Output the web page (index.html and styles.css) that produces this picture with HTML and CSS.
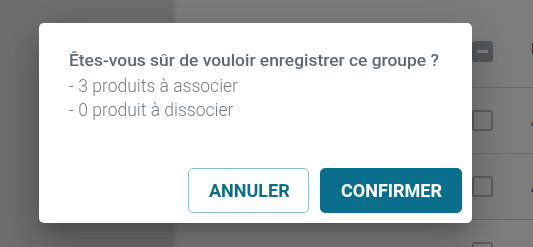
FILE: index.html
```html
<!DOCTYPE html>
<html lang="fr">

<head>
	<meta charset="UTF-8">
	<meta name="viewport" content="width=device-width, initial-scale=1.0">
	<title>Groupe de produits</title>
	<link rel="stylesheet" href="styles.css">
</head>

<body>
	<div class="page">
		<div class="sidebar"></div>
		<div class="main">
			<div class="row head">
				<span class="check indeterminate"></span>
				<span class="cell">Nom</span>
			</div>
			<div class="row">
				<span class="check"></span>
				<span class="cell">Article</span>
			</div>
			<div class="row">
				<span class="check"></span>
				<span class="cell">Article</span>
			</div>
			<div class="row">
				<span class="check"></span>
			</div>
		</div>
	</div>

	<div class="overlay">
		<div class="dialog">
			<div class="dialog-content">
				<p class="title">Êtes-vous sûr de vouloir enregistrer ce groupe ?</p>
				<p class="line">- 3 produits à associer</p>
				<p class="line">- 0 produit à dissocier</p>
			</div>
			<div class="dialog-actions">
				<button class="btn btn-outline">ANNULER</button>
				<button class="btn btn-primary">CONFIRMER</button>
			</div>
		</div>
	</div>
</body>

</html>
```

FILE: styles.css
```css
* {
	margin: 0;
	padding: 0;
	box-sizing: border-box;
}

body {
	font-family: Roboto, "Liberation Sans", sans-serif;
	background-color: #fff;
	overflow: hidden;
}

.page {
	display: flex;
	height: 247px;
	overflow: hidden;
}

.sidebar {
	width: 173px;
	flex-shrink: 0;
	background-color: #dcdcdc;
	box-shadow: 2px 0 4px rgba(0, 0, 0, 0.12);
	position: relative;
	z-index: 1;
}

.main {
	flex: 1;
	min-width: 0;
	overflow: hidden;
	background-color: #fbfbfb;
}

.row {
	display: flex;
	align-items: center;
	height: 66px;
	padding-left: 299px;
	border-bottom: 1px solid #d4d4d4;
}

.row.head {
	height: 88px;
	align-items: flex-start;
	padding-top: 41px;
}

.check {
	width: 21px;
	height: 21px;
	border: 2px solid #b8bec3;
	border-radius: 3px;
	flex-shrink: 0;
}

.check.indeterminate {
	background-color: #a8b0b6;
	border-color: #a8b0b6;
	position: relative;
}

.check.indeterminate::after {
	content: "";
	position: absolute;
	left: 3px;
	right: 3px;
	top: 7px;
	height: 3px;
	background-color: #fff;
}

.cell {
	margin-left: 38px;
	font-size: 14px;
	color: #444;
	white-space: nowrap;
}

.overlay {
	position: fixed;
	inset: 0;
	z-index: 10;
	background-color: rgba(0, 0, 0, 0.5);
	padding: 23px 0 0 39px;
}

.dialog {
	width: 433px;
	height: 200px;
	background-color: #fff;
	border-radius: 5px;
	display: flex;
	flex-direction: column;
	box-shadow: 0 11px 15px -7px rgba(0, 0, 0, 0.2),
		0 24px 38px 3px rgba(0, 0, 0, 0.14),
		0 9px 46px 8px rgba(0, 0, 0, 0.12);
}

.dialog-content {
	flex: 1;
	padding: 23px 20px 0 30px;
}

.title {
	font-size: 17.4px;
	font-weight: 500;
	line-height: 28px;
	color: #5d6a74;
	white-space: nowrap;
}

.line {
	font-size: 17.5px;
	font-weight: 300;
	line-height: 24px;
	color: #737d86;
}

.dialog-actions {
	display: flex;
	justify-content: flex-end;
	gap: 11px;
	padding: 0 10px 10px 0;
}

.btn {
	height: 45px;
	padding: 0 20px;
	border-radius: 5px;
	font-family: Roboto, "Liberation Sans", sans-serif;
	font-size: 18px;
	font-weight: 700;
	cursor: pointer;
	outline: none;
}

.btn-outline {
	width: 121px;
	background-color: #fff;
	border: 1px solid #8bbccb;
	color: #0d6c88;
}

.btn-primary {
	width: 142px;
	background-color: #0a6f8c;
	border: 1px solid #0a6f8c;
	color: #fff;
}
```
